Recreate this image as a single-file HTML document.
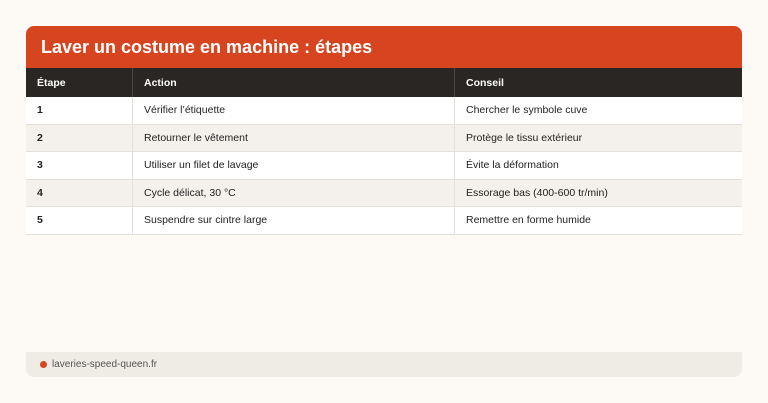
<!DOCTYPE html>
<html><head><style>
body{margin:0;background:#fdf9f5;font-family:"Liberation Sans",sans-serif;width:768px;height:403px;overflow:hidden;position:relative}
.card{position:absolute;left:26px;top:26px;width:716px}
.hd{background:#d64520;height:42px;border-radius:8px 8px 0 0;color:#fff;font-weight:bold;font-size:18px;line-height:42px;padding-left:15px;box-sizing:border-box}
table{border-collapse:collapse;width:716px;font-size:10.5px;color:#222}
th{background:#2a2623;color:#fff;text-align:left;font-weight:bold;height:29px;padding:0 0 0 11px;border-right:1px solid #4a4542}
td{height:26.5px;padding:0 0 0 11px;border-bottom:1px solid #e4e0da;border-right:1px solid #e4e0da}
tr td:last-child,tr th:last-child{border-right:none}
tbody tr:nth-child(even) td{background:#f4f1ec}
tbody tr:nth-child(odd) td{background:#fff}
td:first-child{font-weight:bold}
.ft{position:absolute;left:26px;top:352px;width:716px;height:25px;background:#efebe5;border-radius:0 0 8px 8px;font-size:10px;color:#555;line-height:25px;padding-left:26px;box-sizing:border-box}
.ft:before{content:"";position:absolute;left:14px;top:9px;width:7px;height:7px;border-radius:50%;background:#d64520}
</style></head><body>
<div class="card">
<div class="hd">Laver un costume en machine : étapes</div>
<table>
<thead><tr><th style="width:95px">Étape</th><th style="width:310px">Action</th><th>Conseil</th></tr></thead>
<tbody>
<tr><td>1</td><td>Vérifier l’étiquette</td><td>Chercher le symbole cuve</td></tr>
<tr><td>2</td><td>Retourner le vêtement</td><td>Protège le tissu extérieur</td></tr>
<tr><td>3</td><td>Utiliser un filet de lavage</td><td>Évite la déformation</td></tr>
<tr><td>4</td><td>Cycle délicat, 30 °C</td><td>Essorage bas (400-600 tr/min)</td></tr>
<tr><td>5</td><td>Suspendre sur cintre large</td><td>Remettre en forme humide</td></tr>
</tbody>
</table>
</div>
<div class="ft">laveries-speed-queen.fr</div>
</body></html>
